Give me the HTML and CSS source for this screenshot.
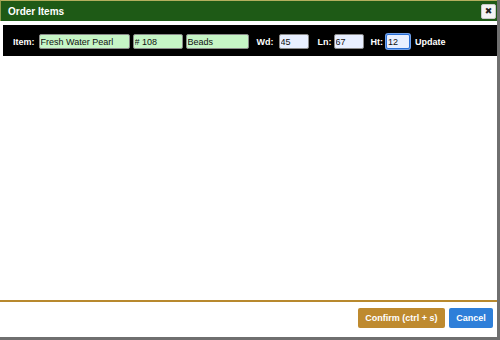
FILE: index.html
```html
<!DOCTYPE html>
<html>
<head>
<meta charset="utf-8">
<link rel="stylesheet" href="styles.css">
</head>
<body>
<div class="dialog">
  <div class="titlebar">
    <span class="title">Order Items</span>
    <button class="close">&#x2716;</button>
  </div>
  <div class="toolbar">
    <span class="lbl lbl-item">Item:</span>
    <input class="fld green w-name" value="Fresh Water Pearl">
    <input class="fld green w-num" value="# 108">
    <input class="fld green w-type" value="Beads">
    <span class="lbl lbl-wd">Wd:</span>
    <input class="fld blue w-dim" value="45">
    <span class="lbl lbl-ln">Ln:</span>
    <input class="fld blue w-dim" value="67">
    <span class="lbl lbl-ht">Ht:</span>
    <input class="fld blue w-ht focus" value="12">
    <span class="lbl lbl-up">Update</span>
  </div>
  <div class="content"></div>
  <div class="footer">
    <button class="btn confirm">Confirm (ctrl + s)</button>
    <button class="btn cancel">Cancel</button>
  </div>
</div>
</body>
</html>
```
FILE: styles.css
```css
html, body {
  margin: 0;
  padding: 0;
  background: #6f6f6f;
  width: 500px;
  height: 340px;
  overflow: hidden;
  font-family: "Liberation Sans", Arial, sans-serif;
}
.dialog {
  width: 497px;
  height: 337px;
  background: #ffffff;
  display: flex;
  flex-direction: column;
  box-sizing: border-box;
}
.titlebar {
  height: 21px;
  background: #1e5a16;
  border-top: 1px solid #b3ae5e;
  border-left: 1px solid #8f9a4a;
  box-sizing: border-box;
  display: flex;
  align-items: center;
  justify-content: space-between;
  padding-left: 7px;
  padding-right: 1px;
}
.title {
  color: #ffffff;
  font-weight: bold;
  font-size: 10px;
}
.close {
  width: 15px;
  height: 15px;
  padding: 0;
  border: 1px solid #c8c8c8;
  border-radius: 2px;
  background: #f4f4f4;
  color: #222;
  font-size: 9px;
  line-height: 13px;
  font-family: "DejaVu Sans", sans-serif;
  display: flex;
  align-items: center;
  justify-content: center;
}
.toolbar {
  margin: 4px 0 0 3px;
  height: 31px;
  background: #000000;
  display: flex;
  align-items: center;
  padding-left: 10px;
  padding-top: 2px;
  box-sizing: border-box;
}
.lbl {
  color: #ffffff;
  font-weight: bold;
  font-size: 9px;
}
.lbl-item { margin-right: 4px; }
.lbl-wd { margin-left: 8px; margin-right: 5px; }
.lbl-ln { margin-left: 9px; margin-right: 2px; }
.lbl-ht { margin-left: 7px; margin-right: 3px; }
.lbl-up { margin-left: 5px; }
.fld {
  height: 15px;
  box-sizing: border-box;
  font-family: "Liberation Sans", Arial, sans-serif;
  font-size: 9px;
  color: #111;
  padding: 0 1px;
  margin: 0;
  border: 1px solid #8a8a8a;
  border-radius: 2px;
  outline: none;
}
.green { background: #c6f5c6; margin-right: 3px; }
.blue { background: #e8efff; }
.w-name { width: 91px; }
.w-num { width: 50px; }
.w-type { width: 63px; margin-right: 0; }
.w-dim { width: 30px; }
.w-ht { width: 24px; }
.focus {
  border: 1px solid #2a6fd6;
  box-shadow: 0 0 0 1px #6fa0ea;
}
.content {
  flex: 1;
}
.footer {
  border-top: 2px solid #b8892e;
  height: 37px;
  box-sizing: border-box;
  display: flex;
  justify-content: flex-end;
  align-items: flex-start;
  padding-top: 6px;
  padding-right: 4px;
  gap: 4px;
}
.btn {
  height: 20px;
  border: none;
  border-radius: 2px;
  color: #ffffff;
  font-weight: bold;
  font-size: 9px;
  font-family: "Liberation Sans", Arial, sans-serif;
  padding: 0;
}
.confirm {
  width: 87px;
  background: #be8a2f;
}
.cancel {
  width: 44px;
  background: #2e7fd9;
}
```
